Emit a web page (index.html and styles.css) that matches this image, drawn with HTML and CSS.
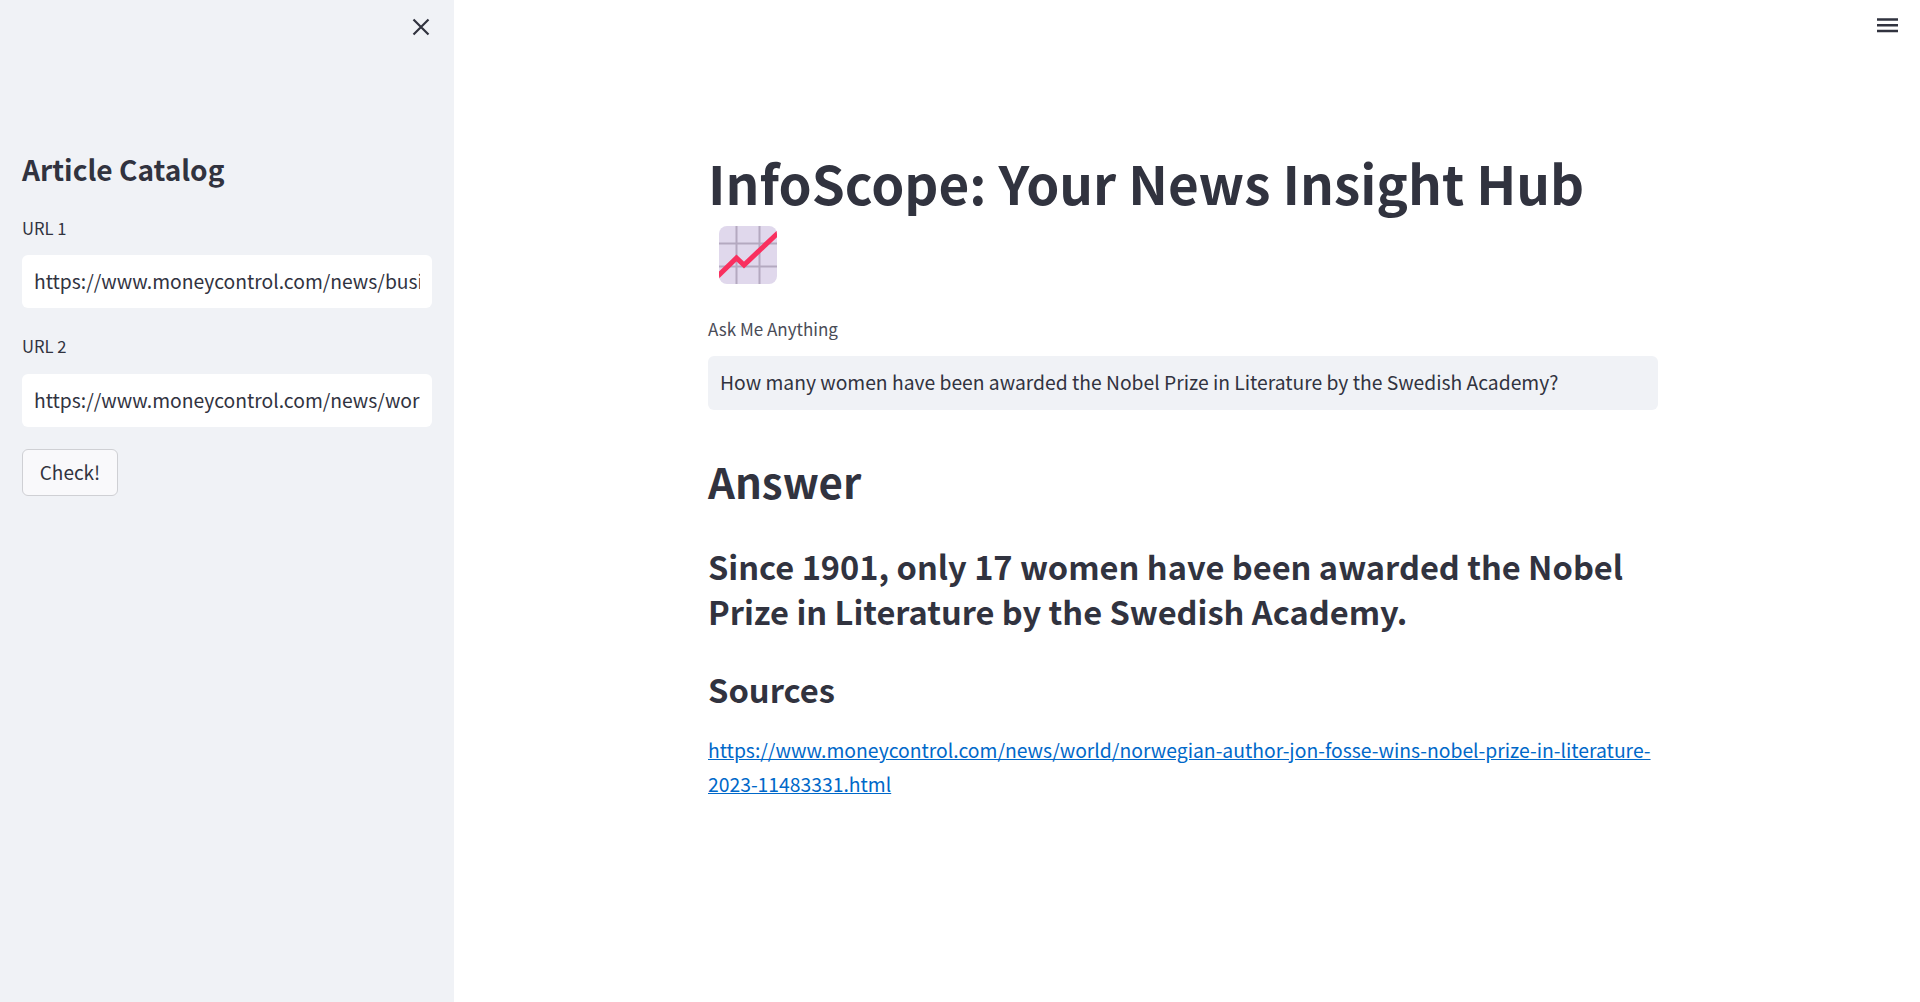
FILE: index.html
```html
<!DOCTYPE html>
<html lang="en">
<head>
<meta charset="utf-8">
<title>InfoScope</title>
<link rel="stylesheet" href="styles.css">
</head>
<body>
<div class="app">
  <aside class="sidebar">
    <div class="close-row">
      <svg class="close-icon" viewBox="0 0 18 18" aria-hidden="true"><path d="M1.5 1.5L16.5 16.5M16.5 1.5L1.5 16.5"/></svg>
    </div>
    <h2 class="side-title">Article Catalog</h2>
    <label class="field-label side-label">URL 1</label>
    <div class="side-input"><span class="input-clip">https://www.moneycontrol.com/news/business/markets/article</span></div>
    <label class="field-label side-label second">URL 2</label>
    <div class="side-input"><span class="input-clip">https://www.moneycontrol.com/news/world/norwegian-author</span></div>
    <button class="check-btn" type="button">Check!</button>
  </aside>
  <main class="main">
    <div class="menu-row">
      <svg class="menu-icon" viewBox="0 0 21 15" aria-hidden="true"><path d="M0 1.5H21M0 7.2H21M0 13H21"/></svg>
    </div>
    <div class="content">
      <h1 class="title">InfoScope: Your News Insight Hub <svg class="emoji" viewBox="0 0 58 58" aria-hidden="true"><defs><clipPath id="emoji-clip"><rect width="58" height="58" rx="8"/></clipPath></defs><g clip-path="url(#emoji-clip)"><rect width="58" height="58" fill="#e0d8ec"/><path class="grid" d="M17.5 0V58M40.5 0V58M0 17.5H58M0 40.5H58"/><path class="trend" d="M-2 51L17.5 32L25 39L60 6"/></g></svg></h1>
      <label class="field-label ask-label">Ask Me Anything</label>
      <div class="ask-input">How many women have been awarded the Nobel Prize in Literature by the Swedish Academy?</div>
      <h2 class="answer-head">Answer</h2>
      <h3 class="answer-text">Since 1901, only 17 women have been awarded the Nobel Prize in Literature by the Swedish Academy.</h3>
      <h3 class="sources-head">Sources</h3>
      <p class="source"><a href="#">https://www.moneycontrol.com/news/world/norwegian-author-jon-fosse-wins-nobel-prize-in-literature-2023-11483331.html</a></p>
    </div>
  </main>
</div>
</body>
</html>
```
FILE: styles.css
```css
* { box-sizing: border-box; }
html, body { margin: 0; height: 100%; }
body {
  font-family: "Noto Sans CJK SC", "Noto Sans", sans-serif;
  color: #31333f;
  background: #fff;
  overflow: hidden;
}
.app { display: flex; height: 1002px; }
.sidebar {
  width: 454px;
  flex: none;
  background: #f0f2f6;
  padding: 0 22px;
  display: flex;
  flex-direction: column;
  align-items: flex-start;
}
.close-row {
  width: 100%;
  height: 151px;
  display: flex;
  justify-content: flex-end;
  padding-top: 18px;
}
.close-icon {
  width: 18px;
  height: 18px;
  margin-right: 2px;
  fill: none;
  stroke: #31333f;
  stroke-width: 2.2;
}
.side-title {
  margin: -2px 0 27px;
  font-size: 28.1px;
  line-height: 40px;
  font-weight: 600;
}
.field-label {
  display: block;
  font-size: 16.6px;
  line-height: 24px;
  font-weight: 400;
}
.side-label { margin-bottom: 15px; }
.side-label.second { margin-top: 26px; margin-bottom: 16px; }
.side-input {
  width: 410px;
  height: 53px;
  background: #fff;
  border-radius: 6px;
  padding: 0 12px;
  font-size: 19.3px;
  line-height: 52px;
}
.input-clip {
  display: block;
  overflow: hidden;
  white-space: nowrap;
}
.check-btn {
  margin-top: 22px;
  width: 96px;
  height: 47px;
  background: #f9f9fb;
  border: 1px solid #cfd0d4;
  border-radius: 6px;
  font: inherit;
  font-size: 19px;
  color: #31333f;
  padding: 0 0 2px;
}
.main { flex: 1; min-width: 0; display: flex; flex-direction: column; align-items: center; position: relative; }
.menu-row {
  position: absolute;
  top: 18px;
  right: 22px;
  display: flex;
}
.menu-icon {
  width: 21px;
  height: 15px;
  fill: none;
  stroke: #31333f;
  stroke-width: 2.4;
}
.content {
  width: 950px;
  margin-right: 8px;
  padding-top: 149px;
}
.title {
  margin: 0;
  font-size: 53px;
  line-height: 66px;
  font-weight: 700;
}
.emoji { width: 58px; height: 58px; vertical-align: -13px; margin-left: 11px; }
.emoji .grid { fill: none; stroke: #b4a9c0; stroke-width: 2; }
.emoji .trend { fill: none; stroke: #f9305f; stroke-width: 5; }
.ask-label { margin-top: 33px; color: #4a4c57; font-size: 17px; }
.ask-input {
  margin-top: 15px;
  height: 54px;
  background: #f0f2f6;
  border-radius: 6px;
  padding: 0 12px;
  font-size: 19.3px;
  line-height: 52px;
}
.answer-head {
  margin: 41.5px 0 0;
  font-size: 42px;
  line-height: 58px;
  font-weight: 600;
}
.answer-text {
  margin: 33px 0 0;
  font-size: 32.6px;
  line-height: 45px;
  font-weight: 600;
}
.sources-head {
  margin: 33.5px 0 0;
  font-size: 32.7px;
  line-height: 45px;
  font-weight: 600;
}
.source {
  margin: 22px 0 0;
  font-size: 19.33px;
  line-height: 34px;
}
.source a { color: #0068c9; }
```
